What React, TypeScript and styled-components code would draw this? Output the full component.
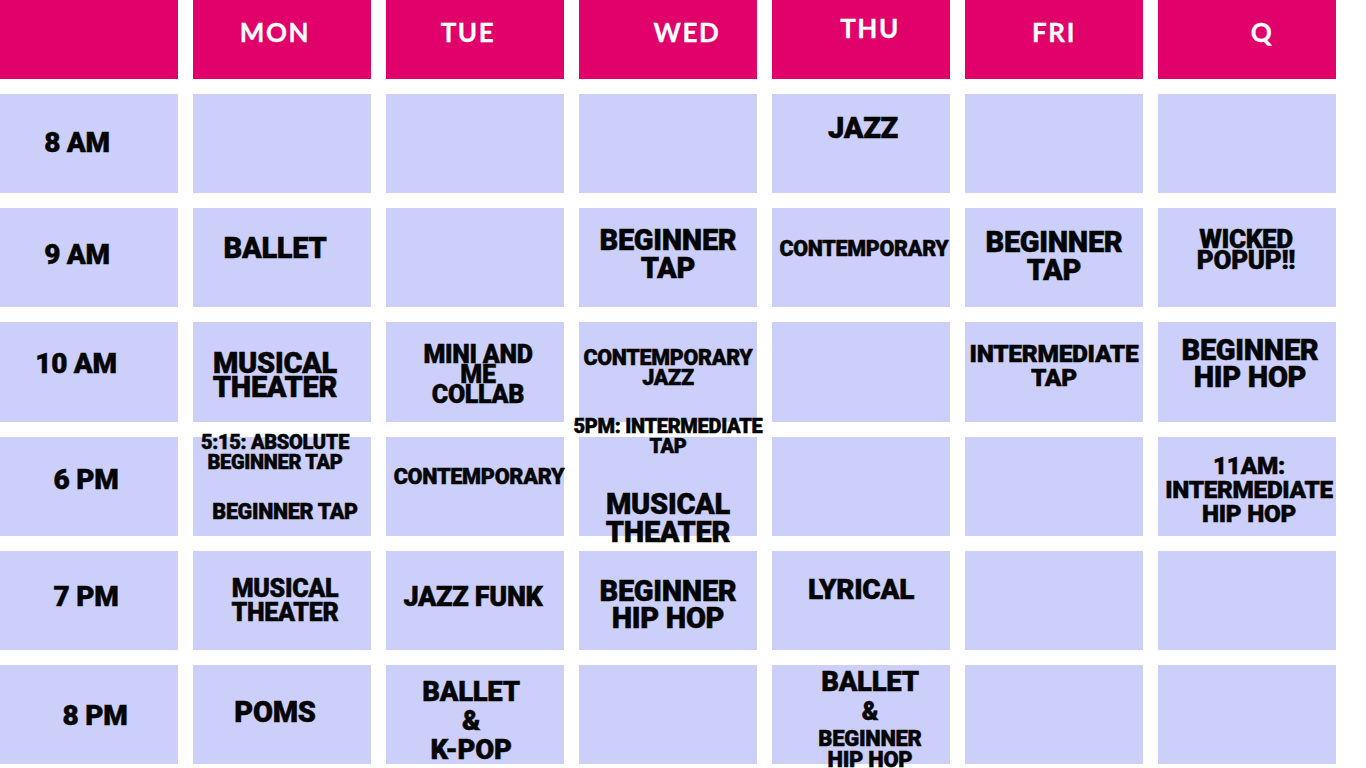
import styled, { createGlobalStyle } from "styled-components";

const GlobalStyle = createGlobalStyle`
  html, body {
    margin: 0;
    padding: 0;
    background: #ffffff;
    overflow: hidden;
  }
`;

type Line = { t: string; size: number; lh: number };
type Block = { lines: Line[]; dx?: number; gap?: number };
type Slot = { blocks: Block[]; dx: number; dy: number } | null;
type Row = { time: string; tdx: number; tdy: number; cells: Slot[] };

const L = (t: string, size = 29, lh = 28): Line => ({ t, size, lh });
const one = (lines: Line[], dx: number, dy: number): Slot => ({
  blocks: [{ lines }],
  dx,
  dy,
});

const days = [
  { name: "MON", dx: -7, dy: -8 },
  { name: "TUE", dx: -7, dy: -8 },
  { name: "WED", dx: 19, dy: -8 },
  { name: "THU", dx: 9, dy: -12 },
  { name: "FRI", dx: 0, dy: -8 },
  { name: "Q", dx: 15, dy: -8 },
];

const rows: Row[] = [
  {
    time: "8 AM",
    tdx: -12,
    tdy: -1,
    cells: [null, null, null, one([L("JAZZ")], 2, -16), null, null],
  },
  {
    time: "9 AM",
    tdx: -12,
    tdy: -3,
    cells: [
      one([L("BALLET")], -7, -10),
      null,
      one([L("BEGINNER"), L("TAP")], 0, -4),
      one([L("CONTEMPORARY", 21.5, 24)], 3, -9),
      one([L("BEGINNER"), L("TAP")], 0, -2),
      one([L("WICKED", 26, 21), L("POPUP!!", 26, 21)], -1, -8),
    ],
  },
  {
    time: "10 AM",
    tdx: -13,
    tdy: -8,
    cells: [
      one([L("MUSICAL", 29, 24), L("THEATER", 29, 24)], -7, 3),
      one([L("MINI AND", 25, 20), L("ME", 25, 20), L("COLLAB", 25, 20)], 3, 3),
      one([L("CONTEMPORARY", 21.5, 20), L("JAZZ", 21.5, 20)], 0, -4),
      null,
      one([L("INTERMEDIATE", 24.5, 24), L("TAP", 24.5, 24)], 0, -6),
      one([L("BEGINNER", 29, 27), L("HIP HOP", 29, 27)], 3, -8),
    ],
  },
  {
    time: "6 PM",
    tdx: -3,
    tdy: -6,
    cells: [
      {
        dx: 0,
        dy: -9,
        blocks: [
          { dx: -7, lines: [L("5:15: ABSOLUTE", 20, 20), L("BEGINNER TAP", 20, 20)] },
          { dx: 3, gap: 29, lines: [L("BEGINNER TAP", 21.5, 22)] },
        ],
      },
      one([L("CONTEMPORARY", 21.7, 24)], 4, -9),
      {
        dx: 0,
        dy: -5.5,
        blocks: [
          { lines: [L("5PM: INTERMEDIATE", 20, 20), L("TAP", 20, 20)] },
          { gap: 34.5, lines: [L("MUSICAL", 29, 28), L("THEATER", 29, 28)] },
        ],
      },
      null,
      null,
      one(
        [L("11AM:", 24.3, 24), L("INTERMEDIATE", 24.3, 24), L("HIP HOP", 24.3, 24)],
        2,
        4
      ),
    ],
  },
  {
    time: "7 PM",
    tdx: -3,
    tdy: -3,
    cells: [
      one([L("MUSICAL", 25, 24), L("THEATER", 25, 24)], 3, 1),
      one([L("JAZZ FUNK", 27, 28)], -2, -3),
      one([L("BEGINNER", 29, 27), L("HIP HOP", 29, 27)], 0, 5),
      one([L("LYRICAL", 28, 28)], 0, -10),
      null,
      null,
    ],
  },
  {
    time: "8 PM",
    tdx: 6,
    tdy: 1,
    cells: [
      one([L("POMS")], -7, -3),
      one([L("BALLET", 27.5, 29), L("&", 27.5, 29), L("K-POP", 27.5, 29)], -4, 6),
      null,
      {
        dx: 9,
        dy: 4,
        blocks: [
          {
            lines: [
              L("BALLET", 27.5, 28),
              L("&", 25, 32),
              L("BEGINNER", 22, 22),
              L("HIP HOP", 22, 20),
            ],
          },
        ],
      },
      null,
      null,
    ],
  },
];

export default function App() {
  return (
    <>
      <GlobalStyle />
      <Board>
        <Cell $head />
        {days.map((d) => (
          <Cell $head key={d.name}>
            <DayName $dx={d.dx} $dy={d.dy}>
              {d.name}
            </DayName>
          </Cell>
        ))}
        {rows.map((r) => (
          <Week key={r.time} r={r} />
        ))}
      </Board>
    </>
  );
}

function Week({ r }: { r: Row }) {
  return (
    <>
      <Cell>
        <Group $dx={r.tdx} $dy={r.tdy}>
          <Text $size={28} $lh={28}>
            {r.time}
          </Text>
        </Group>
      </Cell>
      {r.cells.map((slot, i) => (
        <Cell key={i}>
          {slot && (
            <Group $dx={slot.dx} $dy={slot.dy}>
              {slot.blocks.map((b, j) => (
                <Chunk key={j} $dx={b.dx ?? 0} $gap={b.gap ?? 0}>
                  {b.lines.map((ln, k) => (
                    <Text key={k} $size={ln.size} $lh={ln.lh}>
                      {ln.t}
                    </Text>
                  ))}
                </Chunk>
              ))}
            </Group>
          )}
        </Cell>
      ))}
    </>
  );
}

const Board = styled.div`
  display: grid;
  grid-template-columns: repeat(7, 178px);
  grid-template-rows: 79px repeat(6, 99.2px);
  column-gap: 15px;
  row-gap: 15px;
  width: 1336px;
  height: 768px;
  overflow: hidden;
  font-family: Roboto, Inter, "Liberation Sans", sans-serif;
  color: #050505;
`;

const Cell = styled.div<{ $head?: boolean }>`
  display: flex;
  align-items: center;
  justify-content: center;
  background: ${(p) => (p.$head ? "#e1016a" : "#cbcffa")};
  overflow: visible;
  position: relative;
  z-index: ${(p) => (p.$head ? 0 : 1)};
`;

const DayName = styled.div<{ $dx: number; $dy: number }>`
  font-family: Lato, "Open Sans", sans-serif;
  font-weight: 700;
  font-size: 26px;
  letter-spacing: 1.6px;
  color: #ffffff;
  -webkit-text-stroke: 0.3px #ffffff;
  transform: translate(${(p) => p.$dx}px, ${(p) => p.$dy}px);
`;

const Group = styled.div<{ $dx: number; $dy: number }>`
  display: flex;
  flex-direction: column;
  align-items: center;
  text-align: center;
  transform: translate(${(p) => p.$dx}px, ${(p) => p.$dy}px);
`;

const Chunk = styled.div<{ $dx: number; $gap: number }>`
  display: flex;
  flex-direction: column;
  align-items: center;
  margin-top: ${(p) => p.$gap}px;
  transform: translateX(${(p) => p.$dx}px);
`;

const Text = styled.span<{ $size: number; $lh: number }>`
  display: block;
  font-size: ${(p) => p.$size}px;
  line-height: ${(p) => p.$lh}px;
  font-weight: 900;
  white-space: nowrap;
  letter-spacing: -0.3px;
  -webkit-text-stroke: 0.5px #050505;
`;
